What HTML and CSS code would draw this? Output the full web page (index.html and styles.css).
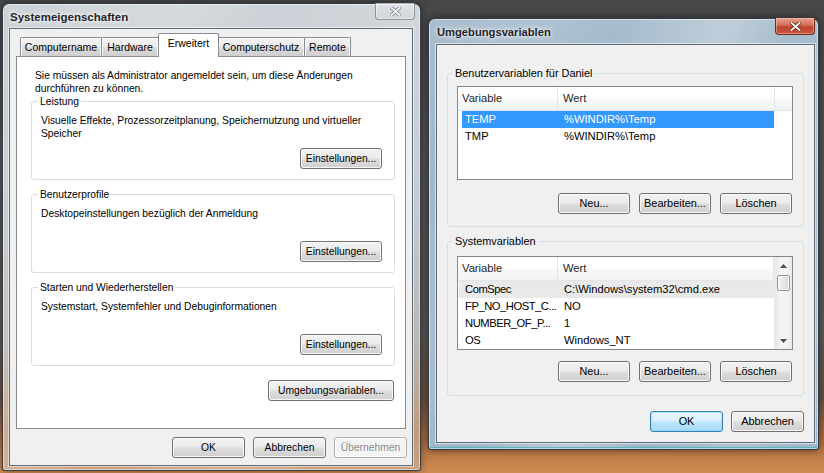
FILE: index.html
```html
<!DOCTYPE html>
<html lang="de">
<head>
<meta charset="utf-8">
<title>Systemeigenschaften</title>
<link rel="stylesheet" href="styles.css">
</head>
<body>
<div class="desktop">

  <section class="win win-sys">
    <header class="titlebar">
      <span class="title">Systemeigenschaften</span>
      <span class="close close-inactive">
        <svg width="11" height="9" viewBox="0 0 11 9"><path d="M1.5 1 L9.5 8 M9.5 1 L1.5 8" stroke="#7f8990" stroke-width="3.6" stroke-linecap="square"/><path d="M1.5 1 L9.5 8 M9.5 1 L1.5 8" stroke="#f4f7f9" stroke-width="1.8" stroke-linecap="square"/></svg>
      </span>
    </header>
    <div class="client client-sys">
      <div class="tabs">
        <span class="tab tab-1">Computername</span>
        <span class="tab tab-2">Hardware</span>
        <span class="tab tab-3 tab-active">Erweitert</span>
        <span class="tab tab-4">Computerschutz</span>
        <span class="tab tab-5">Remote</span>
      </div>
      <div class="panel">
        <p class="intro">Sie müssen als Administrator angemeldet sein, um diese Änderungen durchführen zu können.</p>
        <fieldset class="grp">
          <legend>Leistung</legend>
          <p class="grp-text">Visuelle Effekte, Prozessorzeitplanung, Speichernutzung und virtueller Speicher</p>
          <div class="grp-actions"><button class="btn btn-set">Einstellungen...</button></div>
        </fieldset>
        <fieldset class="grp">
          <legend>Benutzerprofile</legend>
          <p class="grp-text">Desktopeinstellungen bezüglich der Anmeldung</p>
          <div class="grp-actions"><button class="btn btn-set">Einstellungen...</button></div>
        </fieldset>
        <fieldset class="grp">
          <legend>Starten und Wiederherstellen</legend>
          <p class="grp-text">Systemstart, Systemfehler und Debuginformationen</p>
          <div class="grp-actions"><button class="btn btn-set">Einstellungen...</button></div>
        </fieldset>
        <div class="env-row"><button class="btn btn-env">Umgebungsvariablen...</button></div>
      </div>
      <div class="dlg-buttons dlg-buttons-sys">
        <button class="btn btn-dlg">OK</button>
        <button class="btn btn-dlg">Abbrechen</button>
        <button class="btn btn-dlg btn-disabled">Übernehmen</button>
      </div>
    </div>
  </section>

  <section class="win win-env">
    <header class="titlebar">
      <span class="title">Umgebungsvariablen</span>
      <span class="close close-active">
        <svg width="11" height="9" viewBox="0 0 11 9"><path d="M1.5 1 L9.5 8 M9.5 1 L1.5 8" stroke="#6e2418" stroke-width="3.6" stroke-linecap="square"/><path d="M1.5 1 L9.5 8 M9.5 1 L1.5 8" stroke="#ffffff" stroke-width="1.8" stroke-linecap="square"/></svg>
      </span>
    </header>
    <div class="client client-env">
      <fieldset class="grp grp-env">
        <legend>Benutzervariablen für Daniel</legend>
        <div class="list list-user">
          <div class="list-main">
            <div class="lv-head">
              <span class="hcol hcol-1">Variable</span>
              <span class="hcol hcol-2">Wert</span>
              <span class="hcol hcol-fill"></span>
            </div>
            <div class="lv-row lv-selected"><span class="cell cell-1">TEMP</span><span class="cell cell-2">%WINDIR%\Temp</span></div>
            <div class="lv-row"><span class="cell cell-1">TMP</span><span class="cell cell-2">%WINDIR%\Temp</span></div>
          </div>
        </div>
        <div class="grp-buttons">
          <button class="btn btn-sm">Neu...</button>
          <button class="btn btn-sm">Bearbeiten...</button>
          <button class="btn btn-sm">Löschen</button>
        </div>
      </fieldset>

      <fieldset class="grp grp-env grp-env-2">
        <legend>Systemvariablen</legend>
        <div class="list list-sys">
          <div class="list-main">
            <div class="lv-head">
              <span class="hcol hcol-1">Variable</span>
              <span class="hcol hcol-2">Wert</span>
            </div>
            <div class="lv-row lv-hot"><span class="cell cell-1">ComSpec</span><span class="cell cell-2">C:\Windows\system32\cmd.exe</span></div>
            <div class="lv-row"><span class="cell cell-1">FP_NO_HOST_C...</span><span class="cell cell-2">NO</span></div>
            <div class="lv-row"><span class="cell cell-1">NUMBER_OF_P...</span><span class="cell cell-2">1</span></div>
            <div class="lv-row"><span class="cell cell-1">OS</span><span class="cell cell-2">Windows_NT</span></div>
          </div>
          <div class="vscroll">
            <span class="sb-arrow"><svg width="7" height="4" viewBox="0 0 7 4"><path d="M0 4 L3.5 0 L7 4 Z" fill="#4d4d4d"/></svg></span>
            <span class="sb-thumb"></span>
            <span class="sb-track"></span>
            <span class="sb-arrow"><svg width="7" height="4" viewBox="0 0 7 4"><path d="M0 0 L3.5 4 L7 0 Z" fill="#4d4d4d"/></svg></span>
          </div>
        </div>
        <div class="grp-buttons grp-buttons-2">
          <button class="btn btn-sm">Neu...</button>
          <button class="btn btn-sm">Bearbeiten...</button>
          <button class="btn btn-sm">Löschen</button>
        </div>
      </fieldset>

      <div class="dlg-buttons dlg-buttons-env">
        <button class="btn btn-dlg btn-default">OK</button>
        <button class="btn btn-dlg">Abbrechen</button>
      </div>
    </div>
  </section>

</div>
</body>
</html>
```

FILE: styles.css
```css
* { box-sizing: border-box; }

html, body {
  margin: 0;
  padding: 0;
}

body {
  width: 824px;
  height: 473px;
  overflow: hidden;
  font-family: "Liberation Sans", Arial, sans-serif;
  color: #000;
}

.desktop {
  position: relative;
  width: 824px;
  height: 473px;
  background: linear-gradient(180deg, #474747 0%, #555555 35%, #5b5a58 70%, #6a5140 84%, #b06f3e 93%, #cf8b52 100%);
}

/* ---------- windows ---------- */
.win {
  position: absolute;
  display: flex;
  flex-direction: column;
  border: 1px solid rgba(38, 46, 54, 0.9);
  border-radius: 7px 7px 3px 3px;
  box-shadow: inset 0 0 0 1px rgba(255, 255, 255, 0.5), 0 0 7px rgba(0, 0, 0, 0.45);
}

.win-sys {
  left: 2px;
  top: 3px;
  width: 419px;
  height: 468px;
  background:
    linear-gradient(112deg, rgba(255,255,255,0) 0%, rgba(255,255,255,0.18) 30%, rgba(255,255,255,0) 45%, rgba(255,255,255,0.12) 70%, rgba(255,255,255,0) 85%),
    linear-gradient(180deg, #ccd2d7 0%, #c2c9cf 45%, #b9b8b3 72%, #c29a7a 92%, #caa07e 100%);
}

.win-env {
  left: 428px;
  top: 18px;
  width: 391px;
  height: 432px;
  background:
    linear-gradient(110deg, rgba(255,255,255,0) 0%, rgba(255,255,255,0.10) 20%, rgba(255,255,255,0) 35%, rgba(255,255,255,0.28) 55%, rgba(255,255,255,0) 68%, rgba(255,255,255,0.15) 85%, rgba(255,255,255,0) 100%),
    linear-gradient(180deg, #a7bccc 0%, #9db3c5 40%, #a4b7c6 80%, #9fb6c4 100%);
  box-shadow: inset 0 0 0 1px rgba(255, 255, 255, 0.5), inset 0 -2px 0 rgba(70, 170, 190, 0.7), 0 0 9px rgba(0, 0, 0, 0.55);
}

.titlebar {
  display: flex;
  justify-content: space-between;
  align-items: flex-start;
  flex: none;
}

.win-sys .titlebar { height: 24px; padding-left: 7px; }
.win-env .titlebar { height: 25px; padding-left: 8px; }

.title {
  margin-top: 6px;
  font-size: 11.5px;
  line-height: 14px;
  font-weight: bold;
  color: #1f2328;
  text-shadow: 0 0 6px rgba(255, 255, 255, 0.95), 0 0 3px rgba(255, 255, 255, 0.9);
  letter-spacing: 0;
}

.win-env .title { font-size: 11.2px; }

.close {
  display: flex;
  align-items: center;
  justify-content: center;
  width: 40px;
  border-radius: 0 0 4px 4px;
}

.close-inactive {
  height: 17px;
  margin-top: -1px;
  margin-right: 5px;
  border: 1px solid rgba(110, 122, 134, 0.75);
  border-top: none;
  background: linear-gradient(180deg, rgba(255,255,255,0.35) 0%, rgba(255,255,255,0.15) 50%, rgba(255,255,255,0.05) 100%);
  box-shadow: inset 0 0 0 1px rgba(255,255,255,0.45);
}

.close-active {
  height: 17px;
  margin-top: -1px;
  margin-right: 3px;
  border: 1px solid #6b2a1e;
  border-top: none;
  background: linear-gradient(180deg, #e6a08f 0%, #d4705a 45%, #c1432c 55%, #c9583f 100%);
  box-shadow: inset 0 0 0 1px rgba(255, 200, 190, 0.5);
}

.client {
  flex: 1;
  display: flex;
  flex-direction: column;
  background: #f0f0f0;
  border: 1px solid #5d6b78;
  box-shadow: 0 0 0 1px rgba(255, 255, 255, 0.55);
}

.client-sys {
  margin: 0 7px 4px 6px;
  font-size: 10.3px;
  line-height: 13px;
}

.client-env {
  margin: 0 3px 6px 7px;
  font-size: 10.9px;
  line-height: 13px;
}

/* ---------- buttons ---------- */
.btn {
  display: inline-flex;
  align-items: center;
  justify-content: center;
  height: 21px;
  padding: 0 4px;
  font-family: inherit;
  font-size: inherit;
  line-height: 13px;
  color: #000;
  border: 1px solid #707070;
  border-radius: 3px;
  background: linear-gradient(180deg, #f2f2f2 0%, #ebebeb 48%, #dddddd 52%, #cfcfcf 100%);
  box-shadow: inset 0 0 0 1px rgba(252, 252, 252, 0.9);
  white-space: nowrap;
}

.btn-disabled {
  color: #8d8d8d;
  border-color: #adb2b5;
  background: #f4f4f4;
}

.btn-default {
  border-color: #3c7fb1;
  background: linear-gradient(180deg, #eaf6fd 0%, #d9f0fc 48%, #bee6fd 52%, #a7d9f5 100%);
  box-shadow: inset 0 0 0 1px rgba(120, 220, 255, 0.55);
}

.btn-set { width: 82px; }
.btn-env { width: 126px; }
.btn-dlg { width: 73px; }
.btn-sm { width: 72px; }

/* ---------- tabs ---------- */
.tabs {
  display: flex;
  align-items: flex-end;
  height: 23px;
  margin: 4px 0 0 10px;
  position: relative;
  z-index: 1;
}

.tab {
  height: 19px;
  display: flex;
  align-items: center;
  justify-content: center;
  border: 1px solid #898c95;
  border-bottom: none;
  border-radius: 2px 2px 0 0;
  background: linear-gradient(180deg, #f3f3f3 0%, #ebebeb 48%, #dddddd 52%, #cfcfcf 100%);
  box-shadow: inset 0 1px 0 #fff, inset 1px 0 0 #fafafa, inset -1px 0 0 #fafafa;
  font-size: 10.5px;
  padding-top: 1px;
}

.tab + .tab { margin-left: -1px; }

.tab-1 { width: 82px; }
.tab-2 { width: 58px; }
.tab-3 { width: 57px; }
.tab-4 { width: 88px; }
.tab-5 { width: 47px; }

.tab-active {
  height: 24px;
  width: 61px;
  margin: 0 -2px -1px -3px;
  background: #ffffff;
  box-shadow: none;
  padding-top: 0;
  padding-bottom: 4px;
  position: relative;
  z-index: 2;
}

.tab-active + .tab { margin-left: 0; }

.panel {
  height: 373px;
  margin: 0 6px;
  border: 1px solid #898c95;
  background: #ffffff;
  padding: 12px 10px 0 14px;
  display: flex;
  flex-direction: column;
}

.intro {
  margin: 0 20px 0 4px;
}

/* ---------- group boxes ---------- */
.grp {
  margin: 0;
  border: 1px solid #d5dfe5;
  border-radius: 3px;
  padding: 0 12px 10px 6px;
  min-width: 0;
}

.grp legend {
  padding: 0 2px;
  margin: 0;
}

.panel .grp + .grp { margin-top: 8px; }

.grp-text {
  margin: 6px 0 0 3px;
  min-height: 26px;
}

.grp-actions {
  display: flex;
  justify-content: flex-end;
  margin-top: 8px;
}

.env-row {
  display: flex;
  justify-content: flex-end;
  margin: 14px 1px 0 0;
}

.dlg-buttons {
  display: flex;
  justify-content: flex-end;
  gap: 8px;
}

.dlg-buttons-sys {
  margin: 8px 5px 0 0;
}

.dlg-buttons-env {
  margin: 15px 10px 0 0;
}

/* ---------- environment dialog ---------- */
.grp-env {
  margin: 22px 10px 0 10px;
  padding: 0 10px 12px 4px;
}

.grp-env legend { padding: 0 3px; }

.grp-env-2 {
  margin-top: 8px;
  padding-bottom: 13px;
}

.list {
  display: flex;
  height: 94px;
  margin: 6px 0 0 5px;
  border: 1px solid #828790;
  background: #ffffff;
  font-size: 11.2px;
  line-height: 17px;
}

.list-sys { margin-top: 8px; }

.list-main {
  flex: 1;
  min-width: 0;
}

.lv-head {
  display: flex;
  height: 24px;
  border-bottom: 1px solid #e2e4e7;
  background: linear-gradient(180deg, #ffffff 0%, #ffffff 50%, #f7f8f9 52%, #f2f3f4 100%);
}

.hcol {
  display: flex;
  align-items: center;
  padding-left: 5px;
  color: #1e1e1e;
  border-right: 1px solid #e3e5e8;
}

.hcol-1 { width: 100px; padding-left: 4px; }
.hcol-2 { width: 217px; }
.list-sys .hcol-2 { flex: 1; }
.hcol-fill { flex: 1; border-right: none; }

.lv-row {
  display: flex;
  width: 312px;
  height: 17px;
  margin-left: 4px;
}

.list-sys .lv-row { margin-left: 1px; width: 315px; }

.cell {
  padding-left: 3px;
  white-space: nowrap;
}

.cell-1 { width: 99px; flex: none; }
.list-sys .cell-1 { width: 102px; padding-left: 6px; letter-spacing: -0.45px; }

.lv-selected {
  background: #3399ff;
  color: #ffffff;
}

.lv-hot {
  background: #e9e9e9;
}

.vscroll {
  width: 18px;
  display: flex;
  flex-direction: column;
  background: linear-gradient(90deg, #e6e6e6 0%, #f4f4f4 30%, #f4f4f4 70%, #e9e9e9 100%);
  border-left: 1px solid #ececec;
}

.sb-arrow {
  height: 17px;
  display: flex;
  align-items: center;
  justify-content: center;
}

.sb-thumb {
  height: 16px;
  margin: 1px 2px 0 2px;
  border: 1px solid #979797;
  border-radius: 2px;
  background: linear-gradient(90deg, #f3f3f3 0%, #e8e8e8 50%, #d6d6d6 100%);
  box-shadow: inset 0 0 0 1px #ffffff;
}

.sb-track { flex: 1; }

.grp-buttons {
  display: flex;
  justify-content: flex-end;
  gap: 9px;
  margin: 13px 1px 0 0;
}

.grp-buttons-2 { margin-top: 11px; }
```
